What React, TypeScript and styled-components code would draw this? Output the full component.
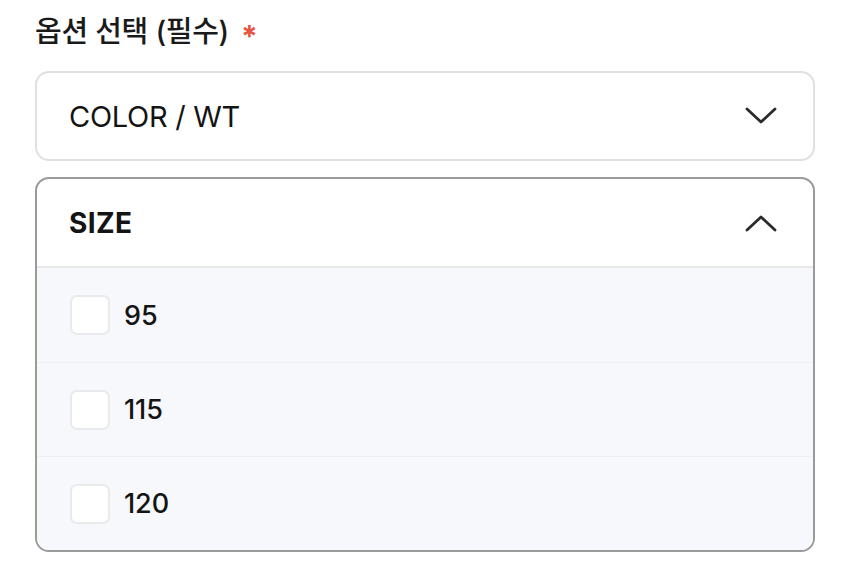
import React from "react";
import styled, { createGlobalStyle } from "styled-components";

const Global = createGlobalStyle`
  html, body { margin: 0; padding: 0; background: #ffffff; }
  body { font-family: Inter, "Noto Sans CJK KR", "Noto Sans", sans-serif; color: #111; }
`;

const Page = styled.div`
  padding: 15px 35px 0 35px;
  width: 780px;
  display: flex;
  flex-direction: column;
`;

const Label = styled.div`
  height: 34px;
  font-size: 29px;
  line-height: 34px;
  font-weight: 500;
  color: #1a1a1a;
  display: flex;
  align-items: center;
  gap: 12px;
  letter-spacing: -0.3px;
  margin-bottom: 22px;
`;

const Required = styled.span`
  color: #e2553f;
  font-size: 30px;
  font-weight: 700;
  line-height: 26px;
  height: 26px;
  margin-top: 8px;
`;

const Box = styled.div<{ $open?: boolean }>`
  border: 2px solid ${(p) => (p.$open ? "#9a9a9a" : "#e0e0e0")};
  border-radius: 14px;
  overflow: hidden;
  background: #ffffff;
  & + & { margin-top: 16px; }
`;

const Header = styled.div<{ $open?: boolean }>`
  height: ${(p) => (p.$open ? 87 : 86)}px;
  padding: 0 36px 0 32px;
  display: flex;
  align-items: center;
  justify-content: space-between;
  border-bottom: ${(p) => (p.$open ? "2px solid #e8e8ea" : "none")};
`;

const HeaderText = styled.span<{ $bold?: boolean }>`
  font-size: ${(p) => (p.$bold ? 28 : 29)}px;
  font-weight: ${(p) => (p.$bold ? 700 : 400)};
  color: #141414;
  letter-spacing: ${(p) => (p.$bold ? "0.4px" : "-0.3px")};
`;

const List = styled.div`
  background: #f7f8fb;
  display: flex;
  flex-direction: column;
`;

const Row = styled.label`
  height: 94px;
  display: flex;
  align-items: center;
  padding-left: 33px;
  gap: 14px;
  box-sizing: border-box;
  & + & { border-top: 1px solid #eef0f3; }
`;

const Check = styled.span`
  width: 40px;
  height: 40px;
  box-sizing: border-box;
  border: 2px solid #e9eaec;
  border-radius: 7px;
  background: #ffffff;
  flex-shrink: 0;
`;

const RowText = styled.span`
  font-size: 27px;
  font-weight: 500;
  color: #141414;
  letter-spacing: -0.1px;
`;

const Chevron = ({ up }: { up?: boolean }) => (
  <svg width="32" height="18" viewBox="0 0 32 18" fill="none">
    <path
      d={up ? "M2 16 L16 3 L30 16" : "M2 2 L16 15 L30 2"}
      stroke="#2b2b2b"
      strokeWidth="2.8"
      strokeLinecap="round"
      strokeLinejoin="round"
    />
  </svg>
);

const sizes = ["95", "115", "120"];

export default function App() {
  return (
    <>
      <Global />
      <Page>
        <Label>
          옵션 선택 (필수) <Required>*</Required>
        </Label>
        <Box>
          <Header>
            <HeaderText>COLOR / WT</HeaderText>
            <Chevron />
          </Header>
        </Box>
        <Box $open>
          <Header $open>
            <HeaderText $bold>SIZE</HeaderText>
            <Chevron up />
          </Header>
          <List>
            {sizes.map((s) => (
              <Row key={s}>
                <Check />
                <RowText>{s}</RowText>
              </Row>
            ))}
          </List>
        </Box>
      </Page>
    </>
  );
}
